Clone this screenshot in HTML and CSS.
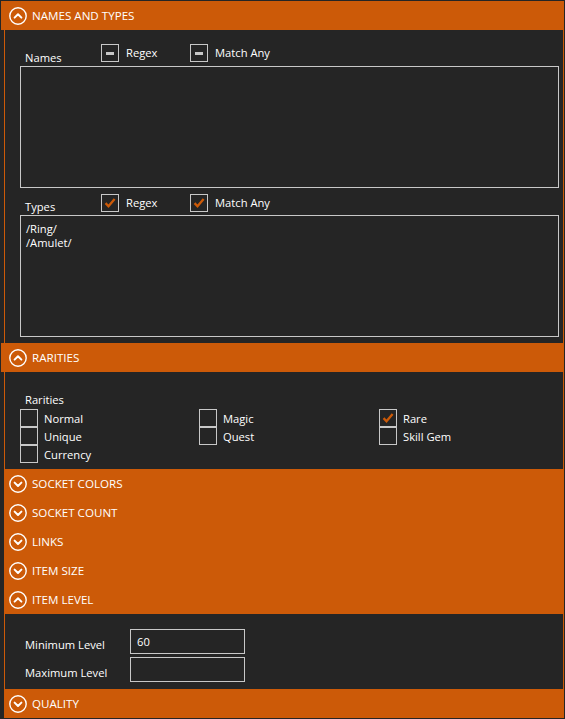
FILE: index.html
```html
<!DOCTYPE html>
<html>
<head>
<meta charset="utf-8">
<title>Filter</title>
<link rel="stylesheet" href="styles.css">
</head>
<body>
<div class="filter">
  <section class="sec">
    <div class="hdr open">
      <svg class="chev" viewBox="0 0 18 18"><circle cx="9" cy="9" r="8.2"/><path d="M5.6 10.6 L9 7.2 L12.4 10.6"/></svg>
      <span>NAMES AND TYPES</span>
    </div>
    <div class="bd names">
      <div class="row r1">
        <span class="lbl">Names</span>
        <span class="cb w1"><span class="box ind"></span>Regex</span>
        <span class="cb"><span class="box ind"></span>Match Any</span>
      </div>
      <div class="ta"></div>
      <div class="row r2">
        <span class="lbl">Types</span>
        <span class="cb w1"><span class="box"><svg viewBox="0 0 18 18"><path d="M4 9.2 L7.3 12.6 L14.2 4.6"/></svg></span>Regex</span>
        <span class="cb"><span class="box"><svg viewBox="0 0 18 18"><path d="M4 9.2 L7.3 12.6 L14.2 4.6"/></svg></span>Match Any</span>
      </div>
      <div class="ta"><div>/Ring/</div><div>/Amulet/</div></div>
    </div>
  </section>

  <section class="sec">
    <div class="hdr open">
      <svg class="chev" viewBox="0 0 18 18"><circle cx="9" cy="9" r="8.2"/><path d="M5.6 10.6 L9 7.2 L12.4 10.6"/></svg>
      <span>RARITIES</span>
    </div>
    <div class="bd rar">
      <div class="lbl">Rarities</div>
      <div class="grid">
        <span class="cb"><span class="box"></span>Normal</span>
        <span class="cb"><span class="box"></span>Magic</span>
        <span class="cb"><span class="box"><svg viewBox="0 0 18 18"><path d="M4 9.2 L7.3 12.6 L14.2 4.6"/></svg></span>Rare</span>
        <span class="cb"><span class="box"></span>Unique</span>
        <span class="cb"><span class="box"></span>Quest</span>
        <span class="cb"><span class="box"></span>Skill Gem</span>
        <span class="cb"><span class="box"></span>Currency</span>
      </div>
    </div>
  </section>

  <section class="sec">
    <div class="hdr closed">
      <svg class="chev" viewBox="0 0 18 18"><circle cx="9" cy="9" r="8.2"/><path d="M5.6 7.6 L9 11 L12.4 7.6"/></svg>
      <span>SOCKET COLORS</span>
    </div>
  </section>
  <section class="sec">
    <div class="hdr closed">
      <svg class="chev" viewBox="0 0 18 18"><circle cx="9" cy="9" r="8.2"/><path d="M5.6 7.6 L9 11 L12.4 7.6"/></svg>
      <span>SOCKET COUNT</span>
    </div>
  </section>
  <section class="sec">
    <div class="hdr closed">
      <svg class="chev" viewBox="0 0 18 18"><circle cx="9" cy="9" r="8.2"/><path d="M5.6 7.6 L9 11 L12.4 7.6"/></svg>
      <span>LINKS</span>
    </div>
  </section>
  <section class="sec">
    <div class="hdr closed">
      <svg class="chev" viewBox="0 0 18 18"><circle cx="9" cy="9" r="8.2"/><path d="M5.6 7.6 L9 11 L12.4 7.6"/></svg>
      <span>ITEM SIZE</span>
    </div>
  </section>

  <section class="sec">
    <div class="hdr closed">
      <svg class="chev" viewBox="0 0 18 18"><circle cx="9" cy="9" r="8.2"/><path d="M5.6 10.6 L9 7.2 L12.4 10.6"/></svg>
      <span>ITEM LEVEL</span>
    </div>
    <div class="bd lvl">
      <div class="frow"><span class="lbl">Minimum Level</span><span class="inp">60</span></div>
      <div class="frow"><span class="lbl">Maximum Level</span><span class="inp"></span></div>
    </div>
  </section>

  <section class="sec">
    <div class="hdr closed">
      <svg class="chev" viewBox="0 0 18 18"><circle cx="9" cy="9" r="8.2"/><path d="M5.6 7.6 L9 11 L12.4 7.6"/></svg>
      <span>QUALITY</span>
    </div>
  </section>
</div>
</body>
</html>
```

FILE: styles.css
```css
* { box-sizing: border-box; }

html, body {
  margin: 0;
  background: #252525;
}

body {
  width: 565px;
  height: 719px;
  overflow: hidden;
  padding: 1px 1px 0 1px;
  font-family: "Open Sans", "Noto Sans", sans-serif;
  font-size: 11.2px;
  color: #ffffff;
}

.filter {
  display: flex;
  flex-direction: column;
}

.hdr {
  height: 29px;
  background: #cc5a08;
  display: flex;
  align-items: center;
  gap: 5px;
  padding-left: 8px;
  text-transform: uppercase;
  font-size: 11.6px;
}

.hdr.closed {
  margin-left: 3px;
  padding-left: 5px;
}

.hdr span {
  line-height: 16px;
  padding-top: 1px;
}

.chev {
  width: 18px;
  height: 18px;
  fill: none;
  stroke: #ffffff;
  stroke-width: 1.4;
  flex: none;
}

.chev path {
  stroke-width: 2;
  stroke-linecap: round;
  stroke-linejoin: round;
}

.bd {
  margin-left: 3px;
  border-left: 1px solid #cc5a08;
  border-right: 1px solid #cc5a08;
  padding: 0 4px 0 15px;
}

.lbl {
  padding-left: 5px;
  line-height: 16px;
}

/* names & types */
.names {
  padding-top: 14px;
  padding-bottom: 6px;
}

.row {
  display: flex;
  align-items: flex-start;
}

.row .lbl {
  width: 81px;
  flex: none;
  padding-top: 6px;
}

.r1 { height: 22px; }
.r2 { height: 21px; margin-top: 6px; }
.r2 .lbl { padding-top: 5px; }

.cb {
  display: flex;
  align-items: center;
  gap: 7px;
  height: 18px;
  line-height: 16px;
  white-space: nowrap;
}

.cb.w1 { width: 89px; }

.box {
  width: 18px;
  height: 18px;
  flex: none;
  border: 1px solid #c8c8c8;
  display: flex;
  align-items: center;
  justify-content: center;
}

.box.ind::after {
  content: "";
  width: 8px;
  height: 3px;
  background: #c8c8c8;
}

.box svg {
  width: 16px;
  height: 16px;
  fill: none;
  stroke: #cc5a08;
  stroke-width: 2.6;
}

.ta {
  height: 122px;
  border: 1px solid #c8c8c8;
  padding: 6px 5px;
  line-height: 14px;
}

/* rarities */
.rar {
  padding-top: 20px;
  padding-bottom: 6px;
}

.rar > .lbl {
  display: block;
  height: 17px;
}

.grid {
  display: grid;
  grid-template-columns: 179px 180px 1fr;
  grid-auto-rows: 18px;
}

.grid .cb {
  gap: 6px;
  padding-top: 1px;
}

.grid .cb .box { margin-top: -1px; }

/* item level */
.lvl {
  padding-top: 15px;
  padding-bottom: 7px;
  display: flex;
  flex-direction: column;
  gap: 3px;
}

.frow {
  display: flex;
  align-items: center;
  height: 25px;
}

.frow .lbl {
  width: 110px;
  flex: none;
  padding-top: 6px;
}

.inp {
  width: 115px;
  height: 25px;
  border: 1px solid #c8c8c8;
  padding: 4px 6px 0;
  line-height: 16px;
}
```
